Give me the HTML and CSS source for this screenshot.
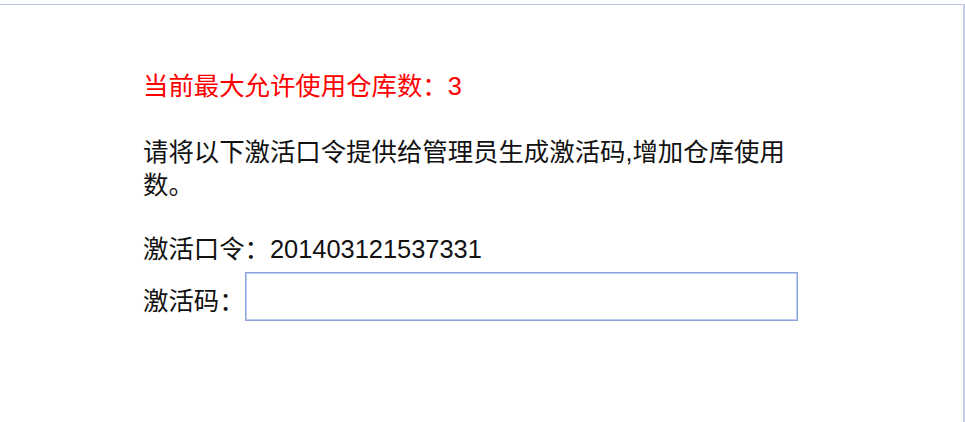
FILE: index.html
```html
<!DOCTYPE html>
<html lang="zh-CN">
<head>
<meta charset="utf-8">
<title>激活</title>
<link rel="stylesheet" href="styles.css">
</head>
<body>
<div class="frame">
  <div class="limit">当前最大允许使用仓库数：3</div>
  <p class="tip">请将以下激活口令提供给管理员生成激活码,增加仓库使用数。</p>
  <div class="code">激活口令：201403121537331</div>
  <div class="act">
    <span class="label">激活码：</span>
    <input class="input" type="text">
  </div>
</div>
</body>
</html>
```
FILE: styles.css
```css
html, body {
  margin: 0;
  padding: 0;
  background: #ffffff;
}
body {
  font-family: "Liberation Sans", "Noto Sans CJK SC", sans-serif;
  font-size: 25.4px;
  color: #111111;
  overflow: hidden;
}
.frame {
  box-sizing: border-box;
  width: 965px;
  height: 418px;
  margin-top: 4px;
  border-top: 1px solid #b7c4e6;
  border-right: 2px solid #c3cee9;
  padding: 65px 0 0 143px;
}
.limit {
  color: #ff0000;
  line-height: 32px;
}
.tip {
  margin: 34px 0 0 0;
  width: 660px;
  line-height: 33px;
}
.code {
  margin-top: 31px;
  line-height: 32px;
}
.act {
  margin-top: 7px;
  display: flex;
  align-items: center;
  gap: 0;
}
.label {
  line-height: 32px;
  padding-top: 9px;
}
.input {
  box-sizing: border-box;
  width: 553px;
  height: 49px;
  margin: 0;
  padding: 0 6px;
  border: 1px solid #8ea4dc;
  box-shadow: inset 0 0 0 1px #bccaee;
  outline: none;
  background: #ffffff;
  font: inherit;
}
```
